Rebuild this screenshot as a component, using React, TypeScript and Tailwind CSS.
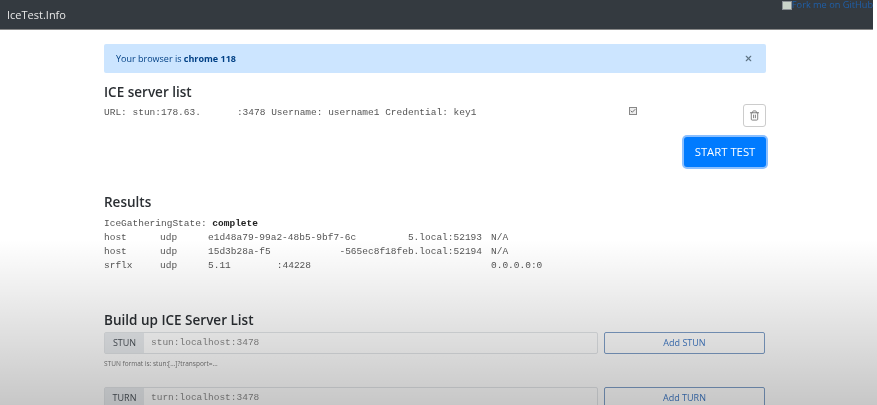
import { Check, Trash2, X } from 'lucide-react';

const mono = 'font-["Liberation_Mono",monospace] text-[9.5px] leading-[14px] text-[#555]';
const heading = 'text-[13.5px] font-semibold leading-[20px] text-[#2b2f33]';

type IFormRowProps = {
  label: string;
  placeholder: string;
  action: string;
};

const FormRow = (props: IFormRowProps) => (
  <div className="flex gap-[6px]">
    <div className="flex h-[22px] w-[494px] rounded-[2px] border border-[#e2e5e8] bg-white">
      <span className="flex w-[39px] items-center justify-center bg-[#e9ecef] text-[9px] text-[#495057]">
        {props.label}
      </span>
      <span className="flex items-center pl-[7px] font-['Liberation_Mono',monospace] text-[9.5px] text-[#8a8a8a]">
        {props.placeholder}
      </span>
    </div>
    <button className="h-[22px] w-[161px] rounded-[2px] border border-[#7f9fc8] text-[9px] font-medium text-[#3f78c4]">
      {props.action}
    </button>
  </div>
);

export default function App() {
  return (
    <div className="relative h-[405px] w-[877px] overflow-hidden bg-white font-['Open_Sans',sans-serif] blur-[0.5px]">
      {/* Navbar */}
      <div className="relative flex h-[30px] w-[873px] items-center border-b border-[#888] bg-[#343a40] pl-[7px] pt-[1px]">
        <span className="text-[11px] text-[#e8e8e8]">IceTest.Info</span>
        <div className="absolute right-0 top-0 flex items-center whitespace-nowrap text-[9.2px] leading-[10px] text-[#1f5fa8]">
          <span className="h-[9px] w-[10px] border border-[#8a8f94] bg-[#c9d3c9]" />
          Fork me on GitHub
        </div>
      </div>

      <div className="ml-[104px] w-[662px]">
        {/* Alert */}
        <div className="mt-[14px] flex h-[29px] items-center justify-between rounded-[2px] bg-[#cce5ff] pl-[12px] pr-[13px] text-[9px] text-[#004085]">
          <span>
            Your browser is <b>chrome 118</b>
          </span>
          <X className="h-[9px] w-[9px] text-[#5f7485]" strokeWidth={3} />
        </div>

        {/* Server list */}
        <h2 className={`mt-[9px] ${heading}`}>ICE server list</h2>
        <div className="relative mt-[4px] h-[22px]">
          <div className={mono}>
            URL: stun:178.63.<span className="inline-block w-[36px]" />:3478 Username: username1 Credential: key1
          </div>
          <span className="absolute left-[525px] top-[1px] flex h-[8px] w-[8px] items-center justify-center border border-[#888] bg-[#eee]">
            <Check className="h-[8px] w-[8px] text-[#444]" strokeWidth={3} />
          </span>
          <button className="absolute right-0 top-[-2px] flex h-[23px] w-[23px] items-center justify-center rounded-[3px] border border-[#ccc] bg-white">
            <Trash2 className="h-[11px] w-[11px] text-[#777]" />
          </button>
        </div>

        <div className="mt-[9px] flex justify-end">
          <button className="h-[30px] w-[82px] rounded-[3px] bg-[#007bff] text-[11.3px] font-medium text-white ring-2 ring-[#8abfff]">
            START TEST
          </button>
        </div>

        {/* Results */}
        <h2 className={`mt-[25px] ${heading}`}>Results</h2>
        <div className={`mt-[5px] ${mono}`}>
          <div>
            IceGatheringState: <b className="text-[#222]">complete</b>
          </div>
          <div className="grid grid-cols-[56px_48px_283px_1fr]">
            <span>host</span>
            <span>udp</span>
            <span className="flex justify-between pr-[9px]">
              <span>e1d48a79-99a2-48b5-9bf7-6c</span>
              <span>5.local:52193</span>
            </span>
            <span>N/A</span>
            <span>host</span>
            <span>udp</span>
            <span className="flex justify-between pr-[9px]">
              <span>15d3b28a-f5</span>
              <span>-565ec8f18feb.local:52194</span>
            </span>
            <span>N/A</span>
            <span>srflx</span>
            <span>udp</span>
            <span>
              5.11<span className="inline-block w-[46px]" />:44228
            </span>
            <span>0.0.0.0:0</span>
          </div>
        </div>

        {/* Build up */}
        <h2 className={`mt-[37px] ${heading}`}>Build up ICE Server List</h2>
        <div className="mt-[2px]">
          <FormRow label="STUN" placeholder="stun:localhost:3478" action="Add STUN" />
          <div className="mt-[5px] h-[28px] text-[6.5px] leading-[10px] text-[#777]">
            STUN format is: stun:[...]?transport=...
          </div>
          <FormRow label="TURN" placeholder="turn:localhost:3478" action="Add TURN" />
        </div>
      </div>

      <div className="pointer-events-none absolute inset-x-0 bottom-0 h-[165px] bg-gradient-to-b from-transparent to-[#00000038]" />
    </div>
  );
}
